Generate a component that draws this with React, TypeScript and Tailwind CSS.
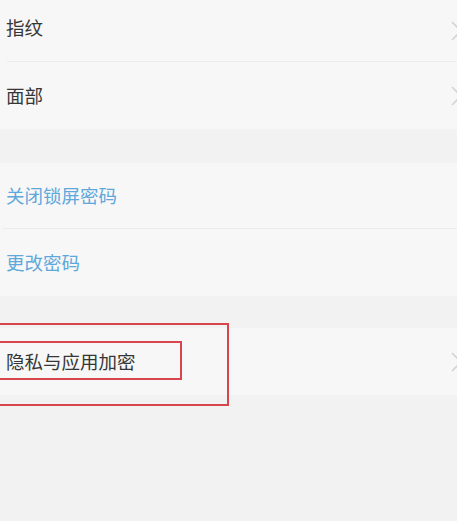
import { ReactNode } from "react";

const font = { fontFamily: '"Noto Sans CJK SC", "Noto Sans", sans-serif' };

function Chevron() {
  return (
    <svg
      width="12"
      height="20"
      viewBox="0 0 12 20"
      className="absolute right-[-6px] top-1/2 -translate-y-1/2"
    >
      <path d="M1 1 L10 10 L1 19" fill="none" stroke="#d4d4d4" strokeWidth="1.6" />
    </svg>
  );
}

function Row({
  label,
  blue,
  arrow,
  className = "h-[66px]",
}: {
  label: string;
  blue?: boolean;
  arrow?: boolean;
  className?: string;
}) {
  return (
    <div className={`relative flex items-center pl-[6px] ${className}`}>
      <span
        className={`text-[18.5px] leading-none ${blue ? "text-[#5fa8db]" : "text-[#363636]"}`}
      >
        {label}
      </span>
      {arrow && <Chevron />}
    </div>
  );
}

function Section({ children }: { children: ReactNode }) {
  return <div className="bg-[#f7f7f7]">{children}</div>;
}

export default function App() {
  return (
    <div
      className="relative w-[457px] h-[521px] overflow-hidden bg-[#f2f2f2]"
      style={font}
    >
      <Section>
        <Row label="指纹" arrow className="h-[61px] pb-[6px]" />
        <div className="ml-[7px] h-px bg-[#ebebeb]" />
        <Row label="面部" arrow className="h-[67px]" />
      </Section>

      <div className="h-[34px]" />

      <Section>
        <Row label="关闭锁屏密码" blue className="h-[65px]" />
        <div className="ml-[3px] h-px bg-[#ebebeb]" />
        <Row label="更改密码" blue className="h-[67px]" />
      </Section>

      <div className="h-[32px]" />

      <Section>
        <Row label="隐私与应用加密" arrow className="h-[67px]" />
      </Section>

      {/* annotation boxes */}
      <div className="absolute left-[-3px] top-[323px] w-[232px] h-[83px] border-2 border-[#d9454f]" />
      <div className="absolute left-[-3px] top-[341px] w-[185px] h-[39px] border-2 border-[#d9454f]" />
    </div>
  );
}
